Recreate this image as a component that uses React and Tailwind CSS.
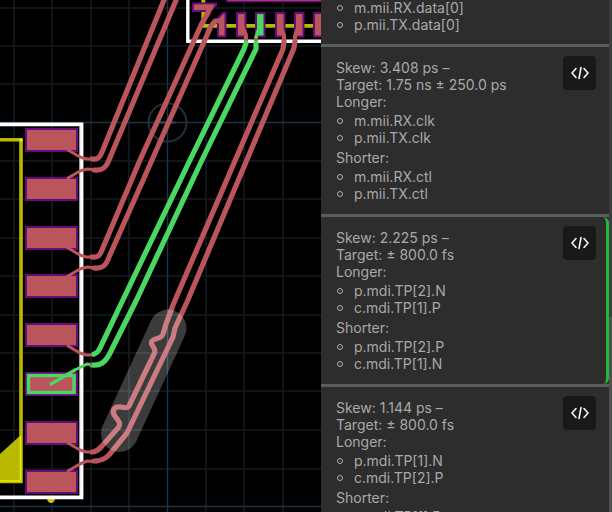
const GRID_X = [14, 52, 91, 129, 206, 244, 283];
const GRID_Y = [8, 46, 84, 161, 199, 238, 276, 315, 353, 391, 430, 469];
const LEFT_PADS = [128, 177, 226, 274, 323, 372, 421, 470];
const TOP_PADS = [237, 256, 276, 295, 314];

const THIN_TRACES = [
  'M68 150 L80 157 L86 159 H94',
  'M68 178 L80 171 L87 169 L97 170',
  'M68 248 L80 255 L86 257 H94',
  'M68 276 L80 269 L87 267 L97 268',
  'M68 346 L80 353 L86 355 H94',
  'M68 443 L80 450 L86 452 H94',
  'M68 471 L80 464 L87 461 L97 462',
];

const TRACES = [
  'M92 159 C98 160 100 157 102 152 L164 0',
  'M94 170 C102 171 106 168 109 160 L177 -2',
  'M92 257 C98 258 100 255 102 250 L140 160 L202 23 L208 13',
  'M94 268 C102 269 106 266 109 257 L152 160 L211 26 L215 21 L219 21',
  'M284 41 L283 49 L173 305 L166 324 L163 334 C161 340 155 337 152 341 C149 346 158 348 154 354 L129 406 C126 411 118 403 114 409 C110 417 124 420 118 428 L102 446 Q97 452 92 452',
  'M295 41 L294 48 L187 302 L175 328 L173 337 L127 433 L109 455 Q103 461 94 461',
];

const PAD_ESCAPES = [
  'M243 28 L246 35 V43',
  'M281 28 L284 35 V43',
  'M298 28 L295 36 V43',
];

const GREEN_TRACES = [
  'M94 354 C98 353 99 350 101 346 L120 306 L190 160 L244 49 L246 43',
  'M92 365 C101 366 105 362 109 355 L136 301 L202 160 L256 49 L256 43',
];

const CHECKS = [
  { skew: '3.408 ps', target: '1.75 ns ± 250.0 ps', longer: ['m.mii.RX.clk', 'p.mii.TX.clk'], shorter: ['m.mii.RX.ctl', 'p.mii.TX.ctl'] },
  { skew: '2.225 ps', target: '± 800.0 fs', longer: ['p.mdi.TP[2].N', 'c.mdi.TP[1].P'], shorter: ['p.mdi.TP[2].P', 'c.mdi.TP[1].N'], active: true },
  { skew: '1.144 ps', target: '± 800.0 fs', longer: ['p.mdi.TP[1].N', 'c.mdi.TP[2].P'], shorter: ['p.mdi.TP[1].P'] },
];

function Board() {
  return (
    <svg className="block h-full w-full" role="img" aria-label="Circuit board layout">
      <g stroke="#131c23" strokeWidth="1.6">
        {GRID_X.map((x) => <line key={x} x1={x} x2={x} y1="0" y2="100%" />)}
        {GRID_Y.map((y) => <line key={y} x1="0" x2="100%" y1={y} y2={y} />)}
      </g>
      <g stroke="#1b3548" strokeWidth="1.4" fill="none">
        <line x1="167.5" x2="167.5" y1="0" y2="100%" />
        <line x1="0" x2="100%" y1="122.5" y2="122.5" />
        <line x1="0" x2="100%" y1="506.5" y2="506.5" />
        <circle cx="167.5" cy="122.5" r="19" stroke="#1c3040" strokeWidth="2" />
        <path d="M160 122.5 H175" stroke="#26506f" strokeWidth="2" />
      </g>

      <path d="M-1 455 L22 434 V482 H-1 Z" fill="#b9b900" />
      <path d="M-4 139.8 H21 V481.5 H-4" fill="none" stroke="#b9b900" strokeWidth="3.6" />
      <path d="M20.5 436 V481 H0" fill="none" stroke="#e9e900" strokeWidth="1.6" />
      <circle cx="21" cy="140" r="1.5" fill="#f4f400" />
      <path d="M47 499 H55 Q54 503 51 503 Q48 503 47 499 Z" fill="#c4c400" />
      <path d="M-4 124.3 H81.5 V497.3 H-4" fill="none" stroke="#fff" strokeWidth="3.8" />
      <path d="M79.7 126 V495" stroke="#aaa" strokeWidth="1" />

      <path d="M187.8 -4 V41.3 H330" fill="none" stroke="#fff" strokeWidth="3.4" />
      <path d="M203.3 0 V25.8 H330" fill="none" stroke="#b9b900" strokeWidth="3.8" />
      <rect x="227" y="-6" width="110" height="7.500" fill="#ba555c" stroke="#650b7e" strokeWidth="1.6" />
      <path d="M193 3.500 H216 V5.500 L210 11 H193 Z" fill="#ba555c" stroke="#650b7e" strokeWidth="2" />
      <path d="M218 18 L223 13 H225.500 V36.500 H218 Z" fill="#ba555c" stroke="#650b7e" strokeWidth="2" />

      {LEFT_PADS.map((y) => (
        <rect key={y} x="26" y={y + 1} width="51" height="22" fill="#ba555c" stroke="#650b7e" strokeWidth="2" />
      ))}
      {TOP_PADS.map((x, i) => (
        <rect key={x} x={x} y="13" width="8.5" height="23.5" fill={i === 1 ? '#4bd862' : '#ba555c'} stroke="#650b7e" strokeWidth="2" />
      ))}

      <g fill="none" strokeLinecap="round" strokeLinejoin="round">
        <g stroke="#ba555c">
          {THIN_TRACES.map((d) => <path key={d} d={d} strokeWidth="3" />)}
          {PAD_ESCAPES.map((d) => <path key={d} d={d} strokeWidth="4" />)}
          {TRACES.map((d) => <path key={d} d={d} strokeWidth="5.2" />)}
          <path d="M198 7 H211 L207 14" strokeWidth="5" />
          <path d="M256 37 V42" strokeWidth="3.5" />
        </g>
        <g stroke="#4bd862">
          {GREEN_TRACES.map((d) => <path key={d} d={d} strokeWidth="5.2" />)}
          <path d="M259 28 L256 37" strokeWidth="3.4" />
          <path d="M94 365 L87 364 L75 370" strokeWidth="3" />
          <path d="M75 370 L51 384" strokeWidth="3.2" />
        </g>
        <path d="M90 364.5 H92" stroke="#ba555c" strokeWidth="3" strokeLinecap="butt" />
        <path d="M168 328 L119.500 433.500" stroke="#ffffff" strokeOpacity="0.23" strokeWidth="37" />
      </g>
      <rect x="28.5" y="375.500" width="45.5" height="17" fill="none" stroke="#4bd862" strokeWidth="3.4" />
    </svg>
  );
}

function CodeIcon() {
  return (
    <svg viewBox="0 0 18 14" className="h-3.5 w-[18px]" fill="none" stroke="#ffffff" strokeWidth="1.5" strokeLinecap="round" strokeLinejoin="round" aria-hidden="true">
      <path d="M5 2.500 L1 7 L5 11.500 M13 2.500 L17 7 L13 11.500 M10 1.500 L8 12.500" />
    </svg>
  );
}

function NetItem({ children }) {
  return (
    <li className="flex items-center gap-[11px]">
      <span className="ml-px size-1.5 shrink-0 rounded-full border border-[#b0b0b0]" />
      {children}
    </li>
  );
}

function NetList({ items }) {
  return (
    <ul className="mt-0.5 mb-[3px]">
      {items.map((item) => <NetItem key={item}>{item}</NetItem>)}
    </ul>
  );
}

function Check({ skew, target, longer, shorter, active }) {
  return (
    <article className="border-t-[3px] border-[#5d5d5d]">
      <div className={`flex items-start justify-between rounded-r-md pt-3 pb-[9px] pl-[15px] ${active ? 'border-r-[3px] border-[#21ba36] pr-2.5' : 'pr-[13px]'}`}>
        <div>
          <p>Skew: {skew} –</p>
          <p>Target: {target}</p>
          <p>Longer:</p>
          <NetList items={longer} />
          <p>Shorter:</p>
          <NetList items={shorter} />
        </div>
        <button type="button" aria-label="Show code" className="-mt-[3px] flex h-[34px] w-[33px] items-center justify-center rounded bg-[#191919]">
          <CodeIcon />
        </button>
      </div>
    </article>
  );
}

export default function App() {
  return (
    <main className="flex h-screen overflow-hidden bg-black">
      <section className="min-w-0 flex-1">
        <Board />
      </section>
      <aside className="flex w-[291px] shrink-0 bg-[#2d2d2d] font-['Inter',sans-serif] text-[14px] leading-[17px] text-[#a9a9a9]">
        <div className="min-w-0 flex-1">
          <ul className="-mt-px pb-[11px] pl-[15px]">
            <NetItem>m.mii.RX.data[0]</NetItem>
            <NetItem>p.mii.TX.data[0]</NetItem>
          </ul>
          {CHECKS.map((check) => <Check key={check.skew} {...check} />)}
        </div>
        <div className="flex w-[3px] flex-col bg-[#3d3d3d]">
          <div className="mt-auto h-[38%] bg-[#505050]" />
        </div>
      </aside>
    </main>
  );
}
